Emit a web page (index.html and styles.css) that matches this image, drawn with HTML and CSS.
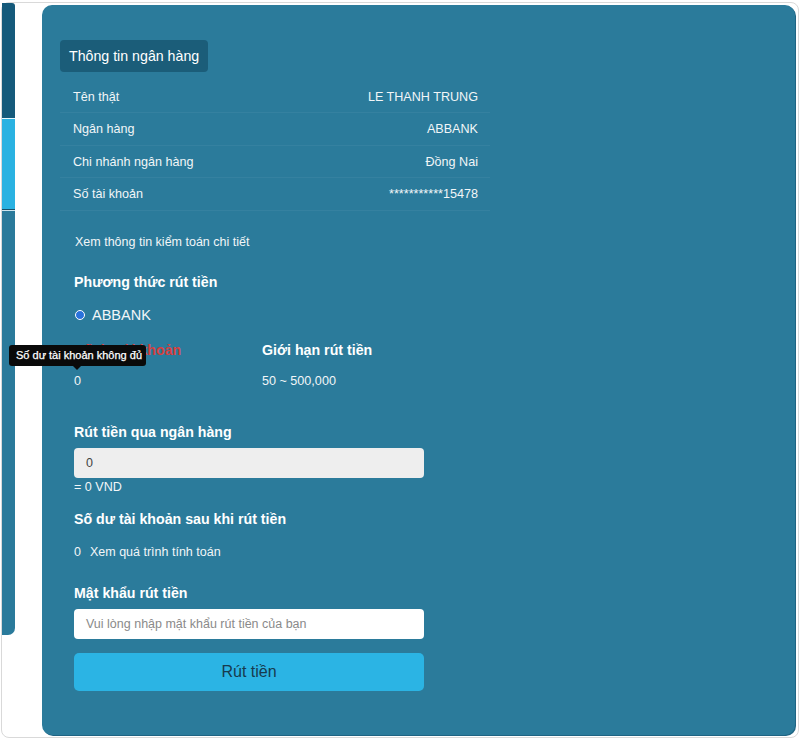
FILE: index.html
```html
<!DOCTYPE html>
<html lang="vi">
<head>
<meta charset="utf-8">
<title>Rút tiền</title>
<link rel="stylesheet" href="styles.css">
</head>
<body>
<div class="frame">
  <aside class="sidebar">
    <div class="side-top"></div>
    <div class="side-active"></div>
    <div class="side-rest"></div>
  </aside>
  <main class="panel">
    <div class="tab">Thông tin ngân hàng</div>
    <div class="info">
      <div class="row"><span>Tên thật</span><span>LE THANH TRUNG</span></div>
      <div class="row"><span>Ngân hàng</span><span>ABBANK</span></div>
      <div class="row"><span>Chi nhánh ngân hàng</span><span>Đồng Nai</span></div>
      <div class="row"><span>Số tài khoản</span><span>***********15478</span></div>
    </div>
    <div class="form">
      <div class="audit">Xem thông tin kiểm toán chi tiết</div>
      <div class="heading h-method">Phương thức rút tiền</div>
      <label class="radio-row"><span class="radio"></span><span>ABBANK</span></label>
      <div class="cols">
        <div class="col col-balance">
          <div class="heading red">Số dư tài khoản</div>
          <div class="val">0</div>
          <div class="tooltip">Số dư tài khoản không đủ</div>
        </div>
        <div class="col">
          <div class="heading">Giới hạn rút tiền</div>
          <div class="val">50 ~ 500,000</div>
        </div>
      </div>
      <div class="heading h-bank">Rút tiền qua ngân hàng</div>
      <div class="input grey">0</div>
      <div class="vnd">= 0 VND</div>
      <div class="heading h-after">Số dư tài khoản sau khi rút tiền</div>
      <div class="calc"><span>0</span><span>Xem quá trình tính toán</span></div>
      <div class="heading h-pass">Mật khẩu rút tiền</div>
      <div class="input white">Vui lòng nhập mật khẩu rút tiền của bạn</div>
      <button class="btn">Rút tiền</button>
    </div>
  </main>
</div>
</body>
</html>
```

FILE: styles.css
```css
* { box-sizing: border-box; }
html, body { margin: 0; padding: 0; background: #fff; }
body {
  font-family: "Liberation Sans", Arial, sans-serif;
  color: #f2f6f8;
  width: 800px;
  height: 739px;
  overflow: hidden;
}
.frame {
  margin: 2px 1px 0 1px;
  height: 736px;
  border: 1px solid #d9d9d9;
  border-radius: 8px;
  display: flex;
  align-items: flex-start;
  gap: 27px;
  padding-right: 3px;
}
.sidebar {
  width: 13px;
  flex: none;
  display: flex;
  flex-direction: column;
}
.side-top {
  height: 115px;
  background: #155a7b;
  border-top-right-radius: 3px;
}
.side-active {
  height: 92px;
  background: #2ab2e2;
  border-top: 1px solid #e6f6fc;
  border-bottom: 1px solid #17506a;
}
.side-rest {
  height: 425px;
  background: #2a7a9b;
  border-top: 1px solid #cfe6ef;
  border-bottom-right-radius: 7px;
}
.panel {
  flex: 1;
  margin-top: 2px;
  height: 730px;
  background: #2b7b9b;
  border-radius: 10px;
  box-shadow: 1px 1px 0 #1f6483;
  padding: 35px 18px;
}
.tab {
  display: inline-block;
  height: 32px;
  line-height: 32px;
  padding: 0 9px;
  background: #1b5d79;
  border-radius: 4px;
  font-size: 14.2px;
  color: #fff;
}
.info {
  width: 430px;
  margin-top: 9px;
}
.row {
  height: 32px;
  display: flex;
  justify-content: space-between;
  align-items: center;
  padding: 1px 12px 0 13px;
  border-bottom: 1px solid rgba(255, 255, 255, 0.05);
  font-size: 12.6px;
}
.row:nth-child(2), .row:nth-child(3), .row:nth-child(4) { height: 32.5px; }
.form {
  margin-left: 14px;
  width: 350px;
}
.audit {
  margin-top: 21px;
  margin-left: 1px;
  line-height: 20px;
  font-size: 12.5px;
}
.heading {
  font-size: 14.2px;
  font-weight: bold;
  line-height: 20px;
  color: #fff;
}
.h-method { margin-top: 20px; }
.radio-row {
  margin-top: 13px;
  display: flex;
  align-items: center;
  height: 20px;
  font-size: 14.5px;
  gap: 7px;
}
.radio {
  width: 10px;
  height: 10px;
  border-radius: 50%;
  background: #2a72dc;
  border: 1.5px solid #fff;
  margin-left: 1px;
}
.cols {
  display: flex;
  margin-top: 15px;
}
.col { width: 188px; position: relative; flex: none; }
.col + .col { width: auto; }
.red { color: #d6403f; }
.val {
  margin-top: 11px;
  line-height: 20px;
  font-size: 12.6px;
}
.tooltip {
  position: absolute;
  left: -65px;
  top: 5px;
  width: 137px;
  height: 21px;
  line-height: 21px;
  background: #0a0a0a;
  color: #fff;
  font-size: 11px;
  font-weight: normal;
  -webkit-text-stroke: 0.25px #fff;
  padding-left: 7px;
  border-radius: 3px;
  white-space: nowrap;
}
.tooltip::after {
  content: "";
  position: absolute;
  left: 64px;
  top: 21px;
  border-left: 4px solid transparent;
  border-right: 4px solid transparent;
  border-top: 4px solid #0a0a0a;
}
.h-bank { margin-top: 31px; }
.input {
  margin-top: 6px;
  height: 30px;
  line-height: 30px;
  border-radius: 4px;
  padding-left: 12px;
  font-size: 12.5px;
}
.grey { background: #eeeeee; color: #444; }
.white { background: #fff; color: #8a8a8a; }
.vnd {
  line-height: 18px;
  font-size: 12.6px;
}
.h-after { margin-top: 13px; }
.calc {
  margin-top: 13px;
  line-height: 20px;
  font-size: 12.5px;
  display: flex;
  gap: 9px;
}
.h-pass { margin-top: 21px; }
.btn {
  display: block;
  width: 100%;
  margin-top: 14px;
  height: 38px;
  border: none;
  border-radius: 5px;
  background: #2bb4e4;
  color: #173b4e;
  font-family: "Liberation Sans", Arial, sans-serif;
  font-size: 16px;
}
```
